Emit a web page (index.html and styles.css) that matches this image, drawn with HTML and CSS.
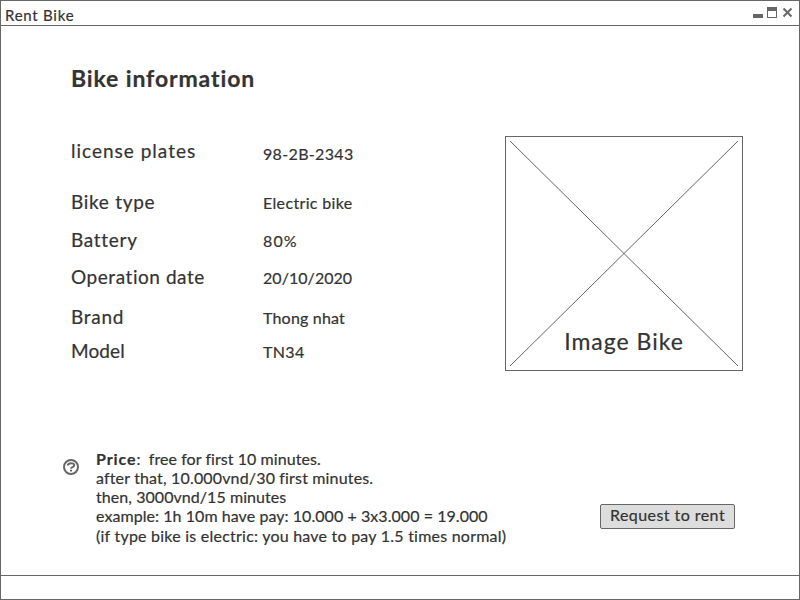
FILE: index.html
```
<!DOCTYPE html>
<html lang="en">
<head>
<meta charset="utf-8">
<title>Rent Bike</title>
<link rel="stylesheet" href="styles.css">
</head>
<body>
<div class="window">
  <header class="titlebar">
    <span class="title">Rent Bike</span>
    <svg class="controls" width="42" height="14" viewBox="0 0 42 14" shape-rendering="crispEdges">
      <path d="M1 8h10v4H1z" fill="#666"/>
      <path d="M15 1h10v11H15zM16 5v6h8V5z" fill="#666" fill-rule="evenodd"/>
      <path d="M31.5 2.5l8 8M39.5 2.5l-8 8" stroke="#666" stroke-width="2" fill="none" shape-rendering="auto"/>
    </svg>
  </header>
  <main class="content">
    <section class="top">
      <div class="details">
        <h1 class="heading">Bike information</h1>
        <dl class="info">
          <dt class="license">license plates</dt><dd class="plate">98-2B-2343</dd>
          <dt>Bike type</dt><dd>Electric bike</dd>
          <dt>Battery</dt><dd class="charge">80%</dd>
          <dt class="operation">Operation date</dt><dd class="date">20/10/2020</dd>
          <dt>Brand</dt><dd class="maker">Thong nhat</dd>
          <dt class="model">Model</dt><dd>TN34</dd>
        </dl>
      </div>
      <figure class="picture">
        <svg class="cross" width="236" height="233" viewBox="0 0 236 233"><path d="M4 4L232 229M232 4L4 229" stroke="#666" stroke-width="1" fill="none"/></svg>
        <figcaption>Image Bike</figcaption>
      </figure>
    </section>
    <section class="bottom">
      <svg class="help" width="18" height="18" viewBox="0 0 18 18"><circle cx="9" cy="9" r="7" fill="none" stroke="#666" stroke-width="2"/><path d="M5.8 7.6C5.8 4.4 12.2 4.4 12.2 7.3C12.2 9.2 9 8.9 9 10.8" fill="none" stroke="#666" stroke-width="2"/><path d="M8 11.8h2v1.8H8z" fill="#666"/></svg>
      <div class="price">
        <p class="free"><b>Price</b>:&nbsp; free for first 10 minutes.</p>
        <p>after that, 10.000vnd/30 first minutes.</p>
        <p class="tight">then, 3000vnd/15 minutes</p>
        <p class="tight">example: 1h 10m have pay: 10.000 + 3x3.000 = 19.000</p>
        <p class="note">(if type bike is electric: you have to pay 1.5 times normal)</p>
      </div>
      <button class="request">Request to rent</button>
    </section>
  </main>
  <footer class="status"></footer>
</div>
</body>
</html>
```
FILE: styles.css
```
* { box-sizing: border-box; }
body { margin: 0; background: #fff; color: #333; font-family: Lato, "Noto Sans", sans-serif; font-size: 16px; font-variant-ligatures: none; -webkit-text-stroke: 0.2px #333; }
h1, dl, dd, p, figure { margin: 0; }
.window { width: 800px; height: 600px; border: 1px solid #666; display: flex; flex-direction: column; }
.titlebar { height: 25px; border-bottom: 1px solid #666; display: flex; justify-content: space-between; padding: 5px 5px 0 4px; }
.title { font-size: 15px; line-height: 18px; letter-spacing: 0.75px; }
.content { flex: 1; padding: 0 56px 0 62px; }
.top { display: flex; justify-content: space-between; padding-left: 8px; height: 425px; }
.heading { font-size: 23px; line-height: 28px; padding-top: 38px; height: 110px; letter-spacing: 0.88px; }
.info { display: grid; grid-template-columns: 192px auto; grid-template-rows: 51px 38px 37px 40px 34px 30px; }
dt { font-size: 19px; line-height: 30px; letter-spacing: 0.7px; white-space: nowrap; }
.license { letter-spacing: 1px; }
.operation { letter-spacing: 0.55px; }
.model { letter-spacing: 0.1px; }
dd { font-size: 16px; line-height: 31px; letter-spacing: 0.34px; white-space: nowrap; }
.plate { padding-top: 2px; }
.charge { letter-spacing: 1.1px; }
.date { letter-spacing: 0.05px; }
.maker { letter-spacing: 0.19px; }
.picture { position: relative; width: 238px; height: 235px; border: 1px solid #666; margin-top: 110px; display: flex; align-items: flex-end; justify-content: center; padding-bottom: 14px; }
.cross { position: absolute; left: 0; top: 0; }
figcaption { position: relative; font-size: 23px; line-height: 30px; letter-spacing: 1px; }
.bottom { display: flex; align-items: flex-start; }
.help { margin: 7px 0 0 -1px; }
.price { margin: -2px 0 0 16px; width: 420px; white-space: nowrap; letter-spacing: 0.16px; }
.price p { line-height: 19px; }
.price b { letter-spacing: 0.9px; }
.price .free { letter-spacing: 0.06px; }
.price .tight { letter-spacing: 0.06px; }
.price .note { letter-spacing: 0.23px; padding-top: 1px; }
.request { margin: 53px 0 0 84px; width: 135px; height: 25px; border: 1px solid #666; border-radius: 2px; background: #ddd; color: #333; font: 16px/20px Lato, sans-serif; letter-spacing: 0.45px; padding: 0 0 3px; white-space: nowrap; }
.status { height: 24px; border-top: 1px solid #666; }
```
